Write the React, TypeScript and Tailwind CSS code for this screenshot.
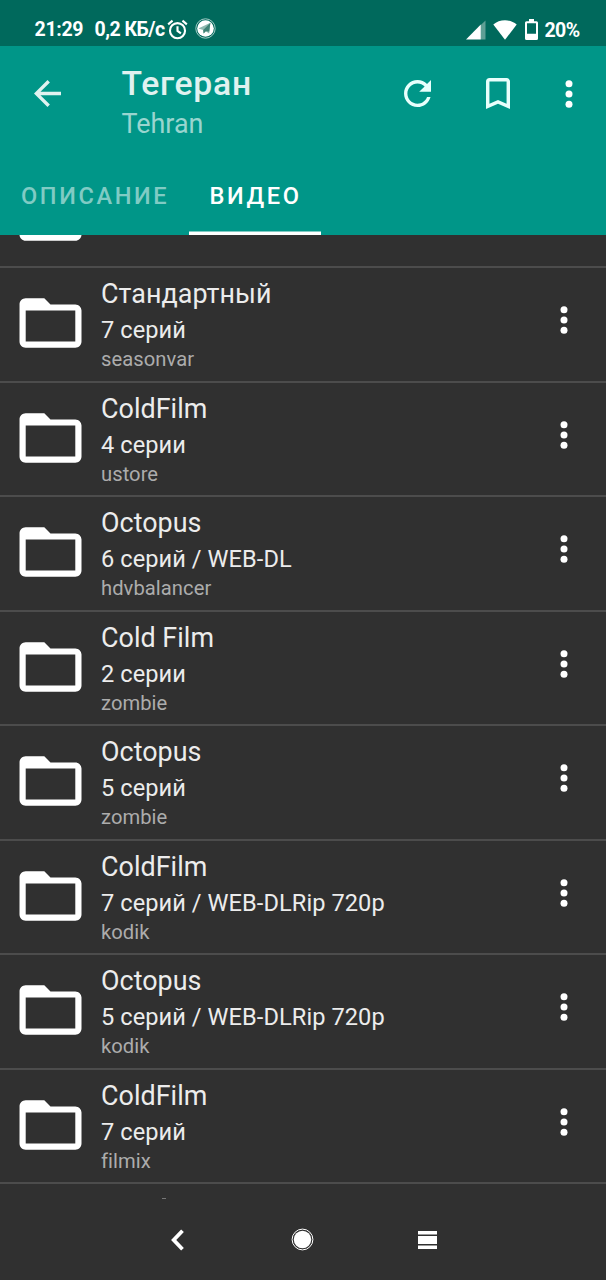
import React from "react";

type Item = { title: string; info: string; source: string };

const items: Item[] = [
  { title: "Стандартный", info: "7 серий", source: "seasonvar" },
  { title: "ColdFilm", info: "4 серии", source: "ustore" },
  { title: "Octopus", info: "6 серий / WEB-DL", source: "hdvbalancer" },
  { title: "Cold Film", info: "2 серии", source: "zombie" },
  { title: "Octopus", info: "5 серий", source: "zombie" },
  { title: "ColdFilm", info: "7 серий / WEB-DLRip 720p", source: "kodik" },
  { title: "Octopus", info: "5 серий / WEB-DLRip 720p", source: "kodik" },
  { title: "ColdFilm", info: "7 серий", source: "filmix" },
];

function Folder() {
  return (
    <svg className="h-[50px] w-[63px] shrink-0" viewBox="0 0 63 50" fill="white">
      <path
        transform="translate(-5.7 -12.2) scale(3.1)"
        d="M20 6h-8l-2-2H4c-1.1 0-1.99.9-1.99 2L2 18c0 1.1.9 2 2 2h16c1.1 0 2-.9 2-2V8c0-1.1-.9-2-2-2zm0 12H4V8h16v10z"
      />
    </svg>
  );
}

function MoreDots() {
  return (
    <svg className="h-[28px] w-[8px] shrink-0" viewBox="0 0 8 28" fill="white">
      <circle cx="4" cy="3.8" r="3.5" />
      <circle cx="4" cy="14" r="3.5" />
      <circle cx="4" cy="24.2" r="3.5" />
    </svg>
  );
}

function StatusBar() {
  return (
    <div className="flex h-[46px] shrink-0 items-start bg-[#00695c] pl-[34.5px] pr-[26px] pt-[18px] text-[20px] font-bold leading-[24px] text-white">
      <span className="w-[60px] whitespace-nowrap text-[19.5px] tracking-[-0.3px]">21:29</span>
      <span className="w-[72px] whitespace-nowrap text-[19.5px] tracking-[-0.5px]">0,2 КБ/с</span>
      <svg className="mt-[1px] h-[21px] w-[21px]" viewBox="0 0 22 22" fill="none" stroke="white" strokeWidth="2.2">
        <circle cx="11" cy="12.2" r="7.9" />
        <path d="M11 7.5v5l3.6 2.6M1.2 5.6L5.8 1.7M20.8 5.6L16.2 1.7" />
      </svg>
      <svg className="ml-[7.5px] h-[21px] w-[21px]" viewBox="0 0 21 21">
        <circle cx="10.5" cy="10.5" r="9.7" fill="none" stroke="#b5d6d1" strokeWidth="0.9" />
        <circle cx="10.5" cy="10.5" r="8.3" fill="white" />
        <path d="M3.3 10.6L15.4 4.8 14.2 15.6 10.8 13.2 8.6 15.4 8.2 12.1z" fill="#8fb9b0" />
        <path d="M8.2 12.1L15.4 4.8 14.2 13.6 10.8 13.2 8.6 15.4z" fill="#3f8275" />
      </svg>
      <svg className="ml-auto mt-[1.5px] h-[20px] w-[20px]" viewBox="0 0 20 20">
        <path d="M15 4.8L19.5 0.5V19.5H15z" fill="#5f9f95" />
        <path d="M0 19.5L14.8 4.5V19.5z" fill="white" />
      </svg>
      <svg className="ml-[7px] mt-[1.5px] h-[20px] w-[24px]" viewBox="0 0 24 20" fill="white">
        <path d="M12 19.8L0.3 4.6C3.5 1.7 7.5 0.3 12 0.3S20.5 1.7 23.7 4.6z" />
      </svg>
      <svg className="ml-[8.5px] mt-[0.5px] h-[21px] w-[13px]" viewBox="0 0 13 21">
        <path d="M4 0h5v2.3h2.5q1.5 0 1.5 1.5V19.5q0 1.5-1.5 1.5h-10Q0 21 0 19.5V3.8Q0 2.3 1.5 2.3H4zM2 4.3V14.7h9V4.3z" fill="white" fillRule="evenodd" />
      </svg>
      <span className="ml-[6.5px] mt-[1px] w-[35.5px] whitespace-nowrap text-[19.5px] tracking-[-0.6px]">20%</span>
    </div>
  );
}

function Toolbar() {
  return (
    <div className="flex h-[110px] shrink-0 pl-[33.5px] pr-[33px]">
      <svg className="mt-[34px] h-[27px] w-[27px] shrink-0" viewBox="4 4 16 16" fill="#e0f2f0">
        <path d="M20 11H7.83l5.59-5.59L12 4l-8 8 8 8 1.41-1.41L7.83 13H20v-2z" />
      </svg>
      <div className="ml-[61px] w-[282px] pt-[18px]">
        <div className="text-[33.7px] font-medium leading-[40px] tracking-[0.75px] text-[#e0f2f0]">Тегеран</div>
        <div className="text-[26.9px] leading-[40px] text-[#99d5cf]">Tehran</div>
      </div>
      <svg className="mt-[34px] h-[27px] w-[27px] shrink-0" viewBox="4 4 16 16" fill="#e8fffc">
        <path d="M17.65 6.35C16.2 4.9 14.21 4 12 4c-4.42 0-7.99 3.58-7.99 8s3.57 8 7.99 8c3.73 0 6.84-2.55 7.73-6h-2.08c-.82 2.33-3.04 4-5.65 4-3.31 0-6-2.69-6-6s2.69-6 6-6c1.66 0 3.14.69 4.22 1.78L13 11h7V4l-2.35 2.35z" />
      </svg>
      <svg className="ml-[55px] mt-[32px] h-[31px] w-[24px] shrink-0" viewBox="5 3 14 18" fill="#e8fffc">
        <path d="M17 3H7c-1.1 0-1.99.9-1.99 2L5 21l7-3 7 3V5c0-1.1-.9-2-2-2zm0 15l-5-2.18L7 18V5h10v13z" />
      </svg>
      <div className="ml-[55px] mt-[33.5px]">
        <MoreDots />
      </div>
    </div>
  );
}

function Tabs() {
  return (
    <div className="flex h-[79px] shrink-0 text-[23.6px] font-medium leading-[81px] tracking-[2.6px]">
      <div className="w-[188.5px] whitespace-nowrap pl-[21px] text-[#80cbc4]">ОПИСАНИЕ</div>
      <div className="flex w-[132.5px] flex-col justify-between whitespace-nowrap text-white">
        <div className="h-[75px] pl-[21px]">ВИДЕО</div>
        <svg className="h-[4px] w-full" viewBox="0 0 132 4" preserveAspectRatio="none">
          <rect y="0.5" width="132" height="3.5" fill="white" />
        </svg>
      </div>
    </div>
  );
}

function Row({ item }: { item: Item }) {
  return (
    <div className="flex h-[114.5px] shrink-0 border-b-2 border-[#4c4c4c] pl-[19px] pr-[38px]">
      <div className="pt-[30px]">
        <Folder />
      </div>
      <div className="ml-[19px] flex-1 whitespace-nowrap pt-[9px]">
        <div className="text-[26.9px] leading-[35px] tracking-[0.03px] text-[#ececec]">{item.title}</div>
        <div className="text-[23.6px] leading-[36px] tracking-[0.07px] text-[#ececec]">{item.info}</div>
        <div className="text-[20.2px] leading-[23px] tracking-[0.05px] text-[#acacac]">{item.source}</div>
      </div>
      <div className="pt-[38px]">
        <MoreDots />
      </div>
    </div>
  );
}

function NavBar() {
  return (
    <div className="flex h-[81px] shrink-0 items-center bg-[#303030] pl-[171px]">
      <svg className="h-[22px] w-[13px]" viewBox="0 0 13 22" fill="none" stroke="white" strokeWidth="3.8">
        <path d="M11.5 1.8L2.7 11l8.8 9.2" />
      </svg>
      <svg className="ml-[107px] h-[23px] w-[23px]" viewBox="0 0 23 23">
        <circle cx="11.5" cy="11.5" r="10.4" fill="none" stroke="white" strokeWidth="1" />
        <circle cx="11.5" cy="11.5" r="8.7" fill="white" />
      </svg>
      <svg className="ml-[104px] h-[18px] w-[19px]" viewBox="0 0 19 18" fill="white">
        <path d="M0 0h19v3.4H0zM0 5h19v8H0zM0 14.6h19V18H0z" />
      </svg>
    </div>
  );
}

export default function App() {
  return (
    <div className="flex h-[1280px] w-[606px] flex-col overflow-hidden bg-[#303030] font-['Roboto',sans-serif]">
      <StatusBar />
      <header className="flex shrink-0 flex-col bg-[#009688]">
        <Toolbar />
        <Tabs />
      </header>
      <main className="flex h-[964px] shrink-0 flex-col overflow-hidden">
        <div className="flex h-[33px] shrink-0 flex-col justify-end overflow-hidden border-b-2 border-[#4c4c4c] pb-[25.5px] pl-[19px]">
          <Folder />
        </div>
        {items.map((item, i) => (
          <Row key={i} item={item} />
        ))}
        <div className="ml-[162px] mt-[14px] h-px w-[4px] shrink-0 bg-[#777777]" />
      </main>
      <NavBar />
    </div>
  );
}
